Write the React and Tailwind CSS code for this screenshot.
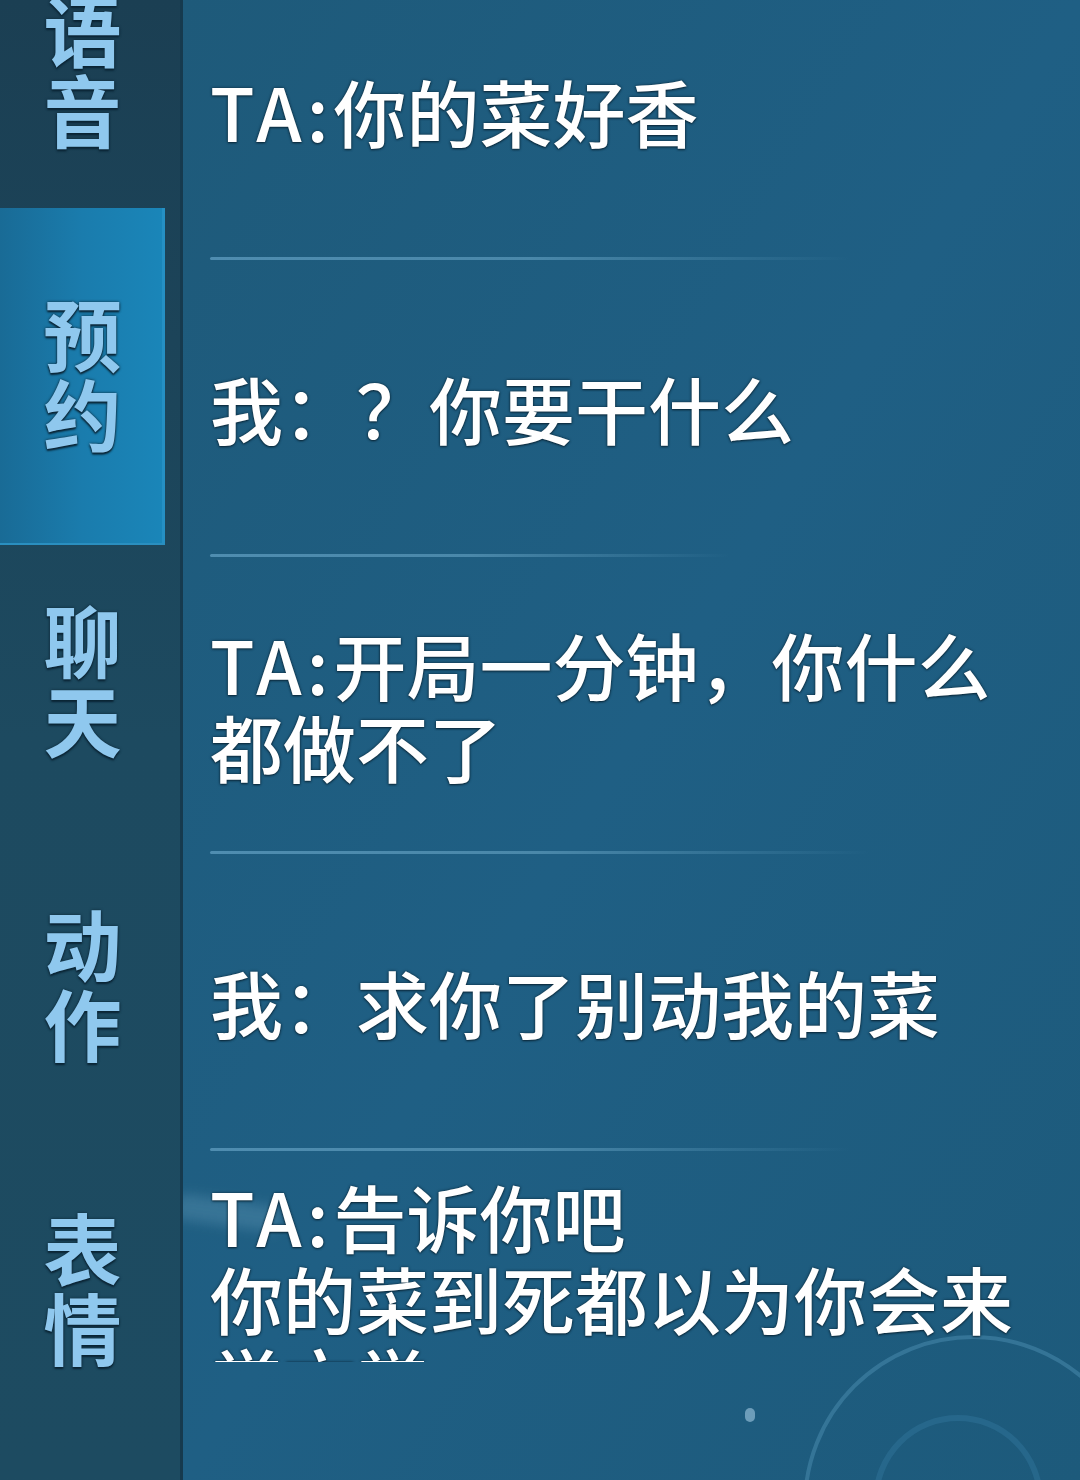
import React from 'react';

const tabs = [
  { label: ['语', '音'], active: false },
  { label: ['预', '约'], active: true },
  { label: ['聊', '天'], active: false },
  { label: ['动', '作'], active: false },
  { label: ['表', '情'], active: false },
];

const messages = [
  { lines: ['TA:你的菜好香'], line: 'w-[640px]' },
  { lines: ['我：？你要干什么'], line: 'w-[520px]' },
  { lines: ['TA:开局一分钟，你什么', '都做不了'], line: 'w-[660px]' },
  { lines: ['我：求你了别动我的菜'], line: 'w-[640px]' },
];

const FONT = "font-['Noto_Sans_CJK_SC','Noto_Sans',sans-serif]";

// "TA:" is drawn wider in the game font, so give it some spacing
const MsgLine = ({ text }) => {
  if (text.startsWith('TA:')) {
    return (
      <div>
        <span className="tracking-[5px]">TA:</span>
        {text.slice(3)}
      </div>
    );
  }
  return <div>{text}</div>;
};

const Sidebar = () => (
  <div className="w-[180px] shrink-0 bg-linear-to-b from-[#1b3f53] via-[#1d4a60] to-[#1d4b61]">
    <div className="flex flex-col mt-[-84px]">
      {tabs.map((tab, i) => (
        <div
          key={i}
          className={
            tab.active
              ? 'w-[165px] pt-[84px] pb-[91px] -mt-[12px] -mb-[19px] bg-linear-to-r from-[#196b96] via-[#1a7cad] to-[#1a86b9] border-b-2 border-[#2a8fc0] shadow-[inset_-3px_0_0_#2590c4]'
              : 'w-[165px] py-[72px]'
          }
        >
          <div className="flex flex-col items-center text-[78px] leading-[80px] font-bold text-[#8fc8ee] [text-shadow:0_0_3px_#0b2535,0_2px_2px_#0b2535]">
            <span>{tab.label[0]}</span>
            <span>{tab.label[1]}</span>
          </div>
        </div>
      ))}
    </div>
  </div>
);

const Divider = ({ width }) => (
  <div className={`${width} h-[3px] rounded-full bg-linear-to-r from-[#4f8db0] via-[#4a88aa] to-transparent`} />
);

export default function App() {
  return (
    <div className={`relative w-[1080px] h-[1480px] flex overflow-hidden bg-[#1d4a60] ${FONT}`}>
      <Sidebar />

      <div className="relative flex-1 border-l-[3px] border-[#163a4e] bg-linear-to-br from-[#1e5a7a] via-[#1f5f84] to-[#1d5a7b] overflow-hidden">
        {/* faint background decorations */}
        <div className="absolute left-[620px] top-[1335px] w-[340px] h-[340px] rounded-full border-[4px] border-[#4585a8]/60" />
        <div className="absolute left-[690px] top-[1415px] w-[170px] h-[170px] rounded-full border-[6px] border-[#2f7399]/50" />
        <div className="absolute left-[562px] top-[1408px] w-[10px] h-[14px] rounded-full bg-[#8fb9d3]/70" />
        <div className="absolute -left-[10px] top-[1200px] w-[110px] h-[26px] rounded-full bg-[#7fb3d1]/25 blur-[6px] rotate-[8deg]" />

        <div className="relative flex flex-col mt-[-37px] pl-[27px] text-white text-[73px] leading-[82px] font-medium [text-shadow:0_0_3px_#0c2a3c,0_1px_2px_#0c2a3c]">
          {messages.map((msg, i) => (
            <React.Fragment key={i}>
              <div className="h-[294px] flex flex-col justify-center">
                {msg.lines.map((l, j) => (
                  <MsgLine key={j} text={l} />
                ))}
              </div>
              <Divider width={msg.line} />
            </React.Fragment>
          ))}

          {/* last message runs off the bottom of the list */}
          <div className="pt-[23px]">
            <div className="h-[188px] overflow-hidden">
              <MsgLine text="TA:告诉你吧" />
              <div>你的菜到死都以为你会来</div>
              <div>学文学</div>
            </div>
          </div>
        </div>
      </div>
    </div>
  );
}
